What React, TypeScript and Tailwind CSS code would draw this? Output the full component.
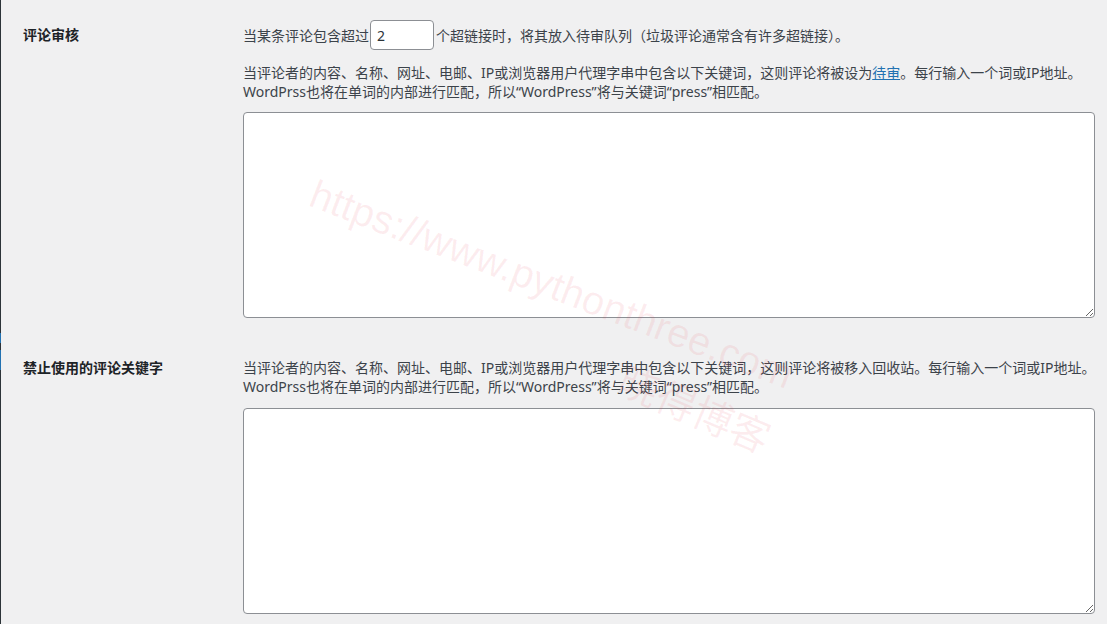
import React from 'react';

const DescLine = ({ children }: { children: React.ReactNode }) => (
  <p className="whitespace-nowrap text-[14px] leading-[19px] text-[#3c434a]">{children}</p>
);

const SettingsRow = ({ label, children, className }: any) => (
  <div className={`grid grid-cols-[220px_852px] ${className || ''}`}>
    <div className="text-[14px] font-bold text-[#1d2327]">{label}</div>
    <div className="flex flex-col">{children}</div>
  </div>
);

const App = () => {
  return (
    <div className="relative flex h-[624px] w-full overflow-hidden bg-[#f0f0f1] font-['Noto_Sans','Noto_Sans_CJK_SC',sans-serif]">
      {/* admin menu edge */}
      <div className="flex w-px flex-col">
        <div className="h-[333px] bg-[#2c3338]" />
        <div className="h-[10px] bg-[#2271b1]" />
        <div className="h-[7px] bg-[#2c3338]" />
        <div className="h-[20px] bg-[#2271b1]" />
        <div className="flex-1 bg-[#2c3338]" />
      </div>

      <main className="flex-1 pl-[22px]">
        {/* 评论审核 */}
        <SettingsRow label={<span className="block leading-[30px]">评论审核</span>} className="pt-[20px] pb-[20px]">
          <div className="flex h-[30px] items-center whitespace-nowrap text-[14px] text-[#3c434a]">
            <span>当某条评论包含超过</span>
            <input
              type="text"
              defaultValue="2"
              className="ml-px mr-[2px] h-[30px] w-[64px] rounded-[4px] border border-[#8c8f94] bg-white px-[6px] text-[14px] text-[#2c3338] outline-none"
            />
            <span>个超链接时，将其放入待审队列（垃圾评论通常含有许多超链接）。</span>
          </div>
          <div className="mt-[13px]">
            <DescLine>
              当评论者的内容、名称、网址、电邮、IP或浏览器用户代理字串中包含以下关键词，这则评论将被设为
              <a className="text-[#2271b1] underline">待审</a>。每行输入一个词或IP地址。
            </DescLine>
            <DescLine>WordPrss也将在单词的内部进行匹配，所以“WordPress”将与关键词“press”相匹配。</DescLine>
          </div>
          <textarea className="mt-[11px] h-[206px] w-[852px] rounded-[4px] border border-[#8c8f94] bg-white outline-none" />
        </SettingsRow>

        {/* 禁止使用的评论关键字 */}
        <SettingsRow label={<span className="block leading-[19px]">禁止使用的评论关键字</span>} className="pt-[20px]">
          <div>
            <DescLine>
              当评论者的内容、名称、网址、电邮、IP或浏览器用户代理字串中包含以下关键词，这则评论将被移入回收站。每行输入一个词或IP地址。
            </DescLine>
            <DescLine>WordPrss也将在单词的内部进行匹配，所以“WordPress”将与关键词“press”相匹配。</DescLine>
          </div>
          <textarea className="mt-[12px] h-[206px] w-[852px] rounded-[4px] border border-[#8c8f94] bg-white outline-none" />
        </SettingsRow>
      </main>

      {/* watermark */}
      <span className="pointer-events-none absolute left-[312px] top-[172px] origin-left rotate-[21deg] whitespace-nowrap font-['Liberation_Sans',sans-serif] text-[40px] leading-[40px] text-[rgba(230,60,80,0.09)]">
        https://www.pythonthree.com
      </span>
      <span className="pointer-events-none absolute left-[622px] top-[356px] origin-left rotate-[23deg] whitespace-nowrap font-['Noto_Sans_CJK_SC',sans-serif] text-[40px] leading-[40px] text-[rgba(230,60,80,0.09)]">
        晓得博客
      </span>
    </div>
  );
};

export default App;
